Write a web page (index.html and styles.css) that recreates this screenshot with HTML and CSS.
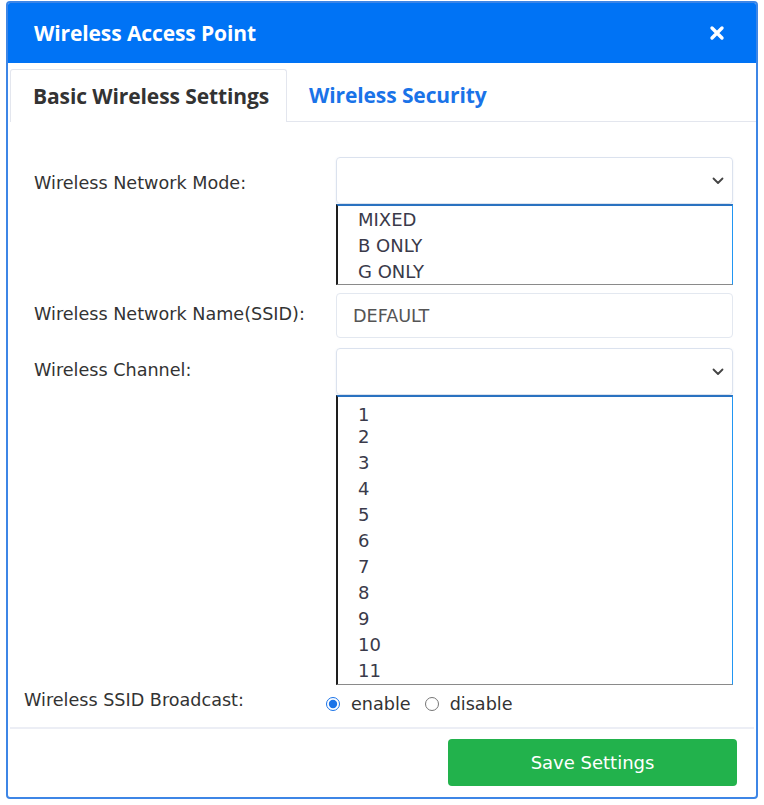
FILE: index.html
```html
<!DOCTYPE html>
<html>
<head>
<meta charset="utf-8">
<link rel="stylesheet" href="styles.css">
</head>
<body>
<div class="dialog">
  <div class="header">
    <span class="title">Wireless Access Point</span>
    <svg class="close" width="16" height="16" viewBox="0 0 16 16"><path d="M3 3 L13 13 M13 3 L3 13" stroke="#fff" stroke-width="3.4" stroke-linecap="round"/></svg>
  </div>
  <div class="tabs">
    <div class="tab active">Basic Wireless Settings</div>
    <div class="tab link">Wireless Security</div>
    <div class="tab-fill"></div>
  </div>
  <div class="form">
    <div class="row">
      <div class="label h47 lower">Wireless Network Mode:</div>
      <div class="control">
        <div class="select"><svg class="chev" width="12" height="8" viewBox="0 0 12 8"><path d="M1.5 1.5 L6 6 L10.5 1.5" fill="none" stroke="#444" stroke-width="1.8" stroke-linecap="round" stroke-linejoin="round"/></svg></div>
        <div class="list list-mode">
          <div class="opt">MIXED</div>
          <div class="opt">B ONLY</div>
          <div class="opt">G ONLY</div>
        </div>
      </div>
    </div>
    <div class="row gap8">
      <div class="label h45 upper">Wireless Network Name(SSID):</div>
      <div class="control">
        <div class="input">DEFAULT</div>
      </div>
    </div>
    <div class="row gap10">
      <div class="label h47 upper">Wireless Channel:</div>
      <div class="control">
        <div class="select"><svg class="chev" width="12" height="8" viewBox="0 0 12 8"><path d="M1.5 1.5 L6 6 L10.5 1.5" fill="none" stroke="#444" stroke-width="1.8" stroke-linecap="round" stroke-linejoin="round"/></svg></div>
        <div class="list list-chan">
          <div class="opt">1</div>
          <div class="opt tight">2</div>
          <div class="opt">3</div>
          <div class="opt">4</div>
          <div class="opt">5</div>
          <div class="opt">6</div>
          <div class="opt">7</div>
          <div class="opt">8</div>
          <div class="opt">9</div>
          <div class="opt">10</div>
          <div class="opt">11</div>
        </div>
      </div>
    </div>
    <div class="row radio-row">
      <div class="label wide">Wireless SSID Broadcast:</div>
      <div class="radios">
        <label class="radio"><input type="radio" name="b" checked> enable</label>
        <label class="radio"><input type="radio" name="b"> disable</label>
      </div>
    </div>
  </div>
  <div class="sep"></div>
  <div class="footer">
    <div class="btn">Save Settings</div>
  </div>
</div>
</body>
</html>
```

FILE: styles.css
```css
* { box-sizing: border-box; }
html, body { margin: 0; padding: 0; background: #fff; }
body { padding: 1px 0 0 6px; font-family: "DejaVu Sans", Verdana, sans-serif; }

.dialog {
  width: 752px;
  height: 798px;
  border: 2px solid #3d86e6;
  border-radius: 4px;
  background: #fff;
  display: flex;
  flex-direction: column;
  overflow: hidden;
}

.header {
  height: 60px;
  background: #0073f5;
  display: flex;
  align-items: center;
  justify-content: space-between;
  padding: 0 31px 0 26px;
}
.title {
  color: #fff;
  font-family: "Open Sans", sans-serif;
  font-weight: 700;
  font-size: 21px;
  letter-spacing: -0.1px;
}
.close { display: block; }

.tabs {
  height: 59px;
  display: flex;
  align-items: flex-end;
  padding-left: 2px;
}
.tab {
  font-family: "Open Sans", sans-serif;
  font-weight: 700;
  font-size: 21px;
  letter-spacing: -0.1px;
}
.tab.active {
  width: 277px;
  height: 53px;
  border: 1px solid #e3e6ee;
  border-bottom: none;
  border-radius: 3px 3px 0 0;
  color: #333;
  padding-left: 22px;
  display: flex;
  align-items: center;
}
.tab.link {
  color: #1a73e8;
  height: 53px;
  padding-left: 22px;
  display: flex;
  align-items: center;
  border-bottom: 1px solid #e3e6ee;
  width: 230px;
}
.tab-fill {
  flex: 1;
  height: 1px;
  border-bottom: 1px solid #e3e6ee;
}

.form {
  padding: 35px 0 0 0;
  flex: 1;
  color: #333;
  font-size: 17.6px;
}
.row { display: flex; }
.gap8 { margin-top: 8px; }
.gap10 { margin-top: 10px; }
.label {
  width: 328px;
  padding-left: 26px;
  display: flex;
  align-items: center;
  color: #333;
}
.label.lower { padding-top: 5px; }
.label.upper { padding-bottom: 4px; }
.h47 { height: 47px; }
.h45 { height: 45px; }
.control { width: 397px; }

.select {
  height: 47px;
  border: 1px solid #dbe2ee;
  border-radius: 4px;
  box-shadow: 0 1px 2px rgba(180, 195, 220, 0.35);
  display: flex;
  align-items: center;
  justify-content: flex-end;
  padding-right: 8px;
}
.chev { display: block; }

.input {
  height: 45px;
  border: 1px solid #e3e8f0;
  border-radius: 4px;
  display: flex;
  align-items: center;
  padding-left: 16px;
  color: #555;
}

.list {
  border-left: 2px solid #1e1e1e;
  border-top: 2px solid #2a72c0;
  border-right: 1px solid #2196f3;
  border-bottom: 1px solid #8a8a8a;
  padding-left: 20px;
  color: #3a3a4a;
  font-size: 18px;
}
.list-mode { height: 81px; padding-top: 1px; }
.list-chan { height: 290px; padding-top: 5px; }
.opt { height: 26px; line-height: 26px; }
.opt.tight { margin-top: -4px; }

.radio-row { height: 34px; align-items: flex-start; }
.label.wide { width: 318px; padding-left: 16px; height: 26px; margin-top: 2px; }
.radios {
  margin-top: 6px;
  display: flex;
  align-items: center;
  height: 26px;
  gap: 14px;
}
.radio { display: flex; align-items: center; gap: 11px; color: #333; }
.radio input {
  margin: 0;
  width: 14px;
  height: 14px;
  accent-color: #1a73e8;
}

.sep {
  height: 2px;
  background: #eceef5;
  margin: 5px 2px 0 2px;
}
.footer {
  display: flex;
  justify-content: flex-end;
  padding: 10px 19px 11px 0;
}
.btn {
  width: 289px;
  height: 47px;
  background: #22b24c;
  border-radius: 4px;
  color: #fff;
  font-size: 18px;
  display: flex;
  align-items: center;
  justify-content: center;
}
```
